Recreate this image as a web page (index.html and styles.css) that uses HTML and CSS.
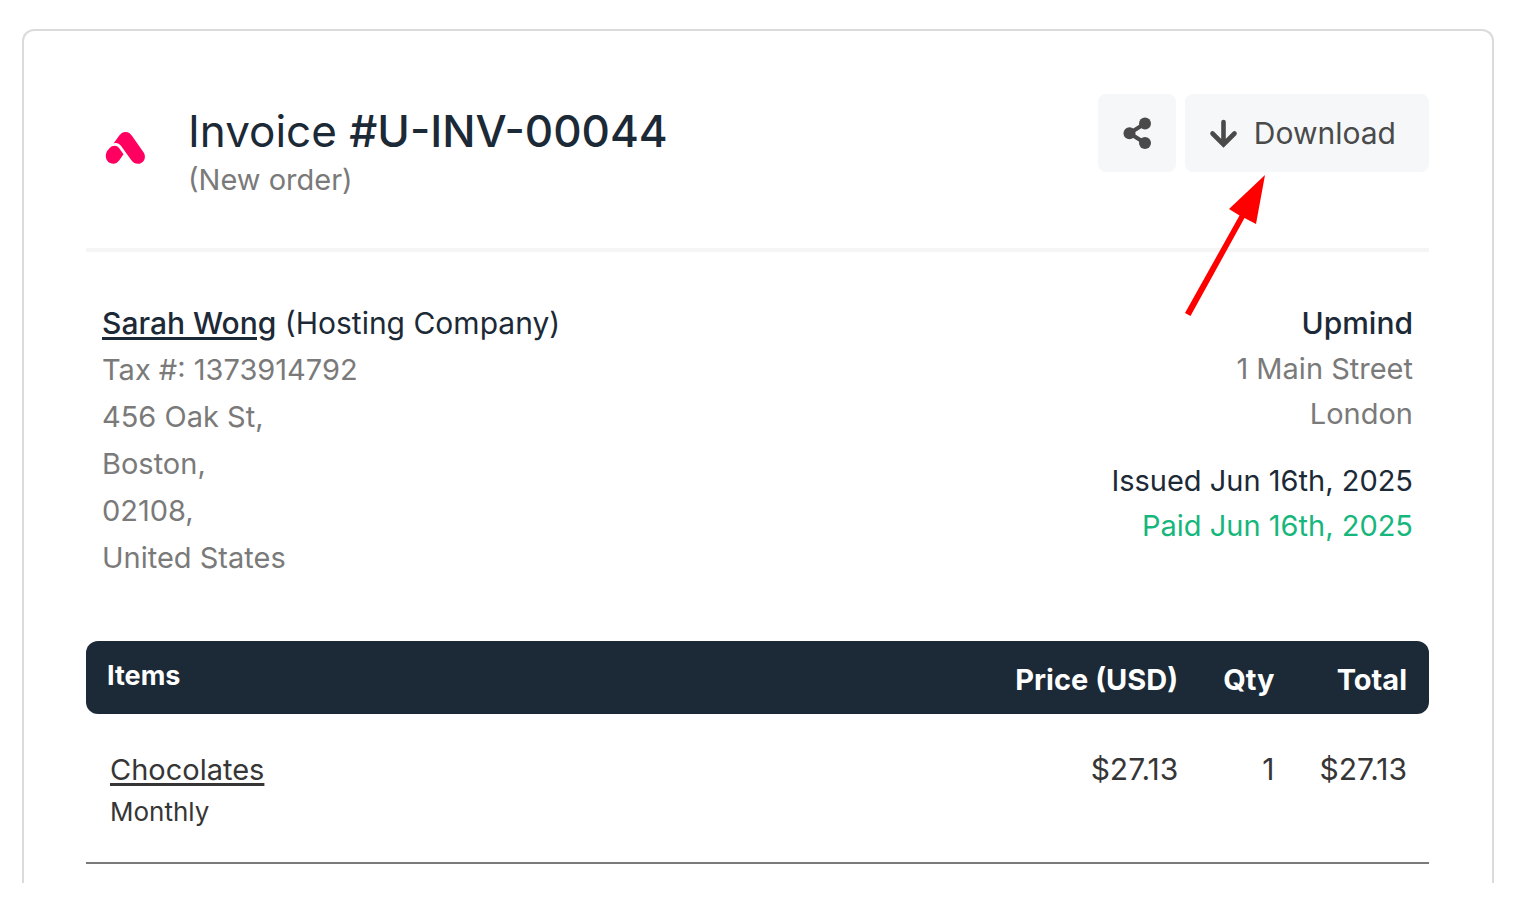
FILE: index.html
```html
<!DOCTYPE html>
<html lang="en">
<head>
  <meta charset="UTF-8">
  <meta name="viewport" content="width=device-width, initial-scale=1.0">
  <title>Invoice #U-INV-00044</title>
  <link rel="stylesheet" href="styles.css">
</head>
<body>

  <main class="invoice">
    <header class="invoice-header">
      <svg class="logo" viewBox="0 0 40 32" aria-hidden="true">
        <path d="M12.300 5.500C15 1.500 17 0 20 0c3 0 5 1.600 6.600 4.100L38 20.200C41.500 25.500 38 31.700 32.500 31.700c-3.200 0-5.300-1.500-6.800-3.800L15.800 14.300C13.500 11.200 11 10.400 8 11.400z"/>
        <path d="M2 18.600 4.200 16C7 12.900 11.300 13 13.500 16L18 22.300 13.800 28.200C12 30.700 10 31.700 7.800 31.700 1.500 31.700-2 24.600 2 18.600z"/>
      </svg>
      <div class="heading">
        <h1>Invoice <strong>#U-INV-00044</strong></h1>
        <p>(New order)</p>
      </div>
      <div class="actions">
        <button class="btn btn-icon" type="button" aria-label="Share">
          <svg class="icon" viewBox="0 0 32 32" aria-hidden="true">
            <path d="M24 6.500 8.500 16.200 24 26" fill="none" stroke="currentColor" stroke-width="4"/>
            <circle cx="24" cy="6.500" r="6"/>
            <circle cx="8.500" cy="16.200" r="6"/>
            <circle cx="24" cy="26" r="6"/>
          </svg>
        </button>
        <button class="btn" type="button">
          <svg class="icon" viewBox="0 0 32 32" aria-hidden="true">
            <path d="M16.500 5v22M5.500 16.500l11 11 11-11" fill="none" stroke="currentColor" stroke-width="4.600" stroke-linecap="round"/>
          </svg>
          Download
        </button>
        <!-- arrow pointing at the download button -->
        <svg class="pointer" viewBox="0 0 80 142" aria-hidden="true">
          <path d="M80 0 71 49 59.500 43 5.500 141 0 138 54.500 40.500 44 34z"/>
        </svg>
      </div>
    </header>

    <section class="parties">
      <address class="client">
        <p class="name"><a href="#">Sarah Wong</a> (Hosting Company)</p>
        <p>Tax #: 1373914792</p>
        <p>456 Oak St,</p>
        <p>Boston,</p>
        <p>02108,</p>
        <p>United States</p>
      </address>
      <div class="company">
        <p class="name"><strong>Upmind</strong></p>
        <p>1 Main Street</p>
        <p>London</p>
        <p class="issued">Issued Jun 16th, 2025</p>
        <p class="paid">Paid Jun 16th, 2025</p>
      </div>
    </section>

    <table class="items">
      <thead>
        <tr>
          <th class="item">Items</th>
          <th>Price (USD)</th>
          <th class="qty">Qty</th>
          <th class="total">Total</th>
        </tr>
      </thead>
      <tbody>
        <tr>
          <td class="item"><a href="#">Chocolates</a><span>Monthly</span></td>
          <td>$27.13</td>
          <td class="qty">1</td>
          <td class="total">$27.13</td>
        </tr>
      </tbody>
    </table>
  </main>

</body>
</html>
```

FILE: styles.css
```css
*{box-sizing:border-box}
body{
  margin:0;min-height:100vh;padding:29px 22px 19px;
  display:flex;flex-direction:column;
  font-family:Inter,"Liberation Sans",sans-serif;font-size:29px;line-height:45px;
  background:#fff;color:#363636;
}
h1,p{margin:0;font-weight:400}
strong{font-weight:500}
a{color:inherit;text-decoration-thickness:3px;text-underline-offset:3px}

.invoice{
  flex:1;padding:63px 63px 0 62px;
  border:2px solid #dbdbdb;border-bottom:none;border-radius:12px 12px 0 0;
}

.invoice-header{
  display:flex;align-items:flex-start;
  padding:0 0 48px 19px;border-bottom:4px solid #f5f5f5;
}
.logo{width:41px;height:32px;margin:38px 42px 0 0;fill:#ff0060}
.heading{flex:1;padding-top:8px}
.heading h1{font-size:44px;line-height:58px;color:#1c2936}
.heading p{line-height:40px;color:#7a7a7a}
.actions{position:relative;display:flex;gap:9px}
.btn{
  display:flex;align-items:center;gap:15px;height:78px;padding:0 33px 0 22px;
  border:none;border-radius:8px;background:#f5f7f9;color:#4a4a4a;
  font:inherit;font-size:30px;cursor:pointer;
}
.btn-icon{width:78px;padding:0;justify-content:center}
.icon{width:32px;height:32px;fill:currentColor}
.pointer{position:absolute;top:81px;right:164px;width:80px;height:142px;fill:#f00}

.parties{
  display:flex;justify-content:space-between;
  padding:49px 16px 60px;color:#7a7a7a;
}
.client{font-style:normal;line-height:47px}
.name,.issued{color:#1c2936}
.name{font-size:30px;line-height:45px}
.client a{font-weight:500}
.company{text-align:right}
.issued{margin-top:22px}
.paid{color:#17b67c}

.items{width:100%;border-collapse:separate;border-spacing:0}
.items th,.items td{width:1%;text-align:right;vertical-align:top;white-space:nowrap}
.items th{
  padding:16px 0 12px;background:#1c2936;color:#fff;font-weight:700;
}
.items td{padding:33px 0 30px;border-bottom:2px solid #7a7a7a;font-size:30px}
.items .item{width:auto;text-align:left;padding-left:24px}
.items th.item{padding:12px 0 12px 21px;font-size:27px;border-radius:12px 0 0 12px}
.items .qty{padding-left:45px}
.items .total{padding-left:45px;padding-right:22px}
.items th.total{border-radius:0 12px 12px 0}
.items td a{display:block;font-size:29px}
.items td span{display:block;font-size:26px;line-height:40px}
```
